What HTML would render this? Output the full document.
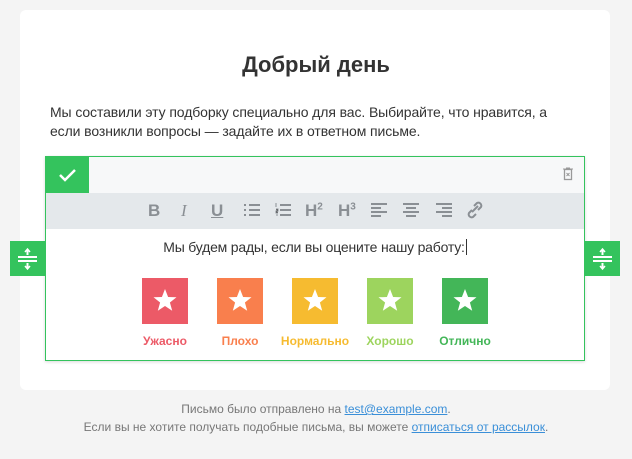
<!DOCTYPE html>
<html><head><meta charset="utf-8"><style>
*{margin:0;padding:0;box-sizing:border-box}
body{width:632px;height:459px;background:#f4f4f4;font-family:"Liberation Sans",Arial,sans-serif;position:relative;overflow:hidden}
.card{position:absolute;left:20px;top:10px;width:590px;height:380px;background:#fff;border-radius:6px}
h1{position:absolute;left:0;top:52px;width:632px;text-align:center;font-size:22px;font-weight:bold;color:#333}
.p{position:absolute;left:50px;top:103px;width:525px;font-size:14px;line-height:19px;color:#333;letter-spacing:-0.1px}
.ed{position:absolute;left:45px;top:156px;width:540px;height:205px;border:1px solid #34c35d;background:#fff;box-shadow:0 1px 3px rgba(0,0,0,.15)}
.top{position:absolute;left:0;top:0;width:538px;height:36px;background:#f7f8f9}
.chk{position:absolute;left:0;top:0;width:43px;height:36px;background:#34c35d}
.tb{position:absolute;left:0;top:36px;width:538px;height:36px;background:#e4e8eb;color:#8a8f94;font-weight:bold;font-size:17px}
.tb span{position:absolute;top:8px}
.line{position:absolute;left:0;top:82px;width:538px;text-align:center;font-size:14px;color:#333;letter-spacing:-0.2px}
.h{position:absolute;top:241px;width:35px;height:35px;background:#34c35d}
.sq{position:absolute;top:278px;width:46px;height:46px}
.lb{position:absolute;top:334px;width:90px;text-align:center;font-size:12px;font-weight:bold}
.f{position:absolute;left:0;width:632px;text-align:center;font-size:12px;color:#777}
.f a{color:#3a8fd8;text-decoration:underline}
</style></head><body>
<div class="card"></div>
<h1>Добрый день</h1>
<div class="p">Мы составили эту подборку специально для вас. Выбирайте, что нравится, а если возникли вопросы — задайте их в ответном письме.</div>
<div class="ed">
<div class="top"><div class="chk"><svg width="43" height="36"><path d="M14 18l5 5 10-10" stroke="#fff" stroke-width="2.5" fill="none"/></svg></div>
<svg style="position:absolute;left:517px;top:10px" width="10" height="14"><rect x="1.5" y="2.5" width="7" height="10" fill="none" stroke="#999" stroke-width="1.3"/><path d="M0 2h10M3 1h4M3.5 6l3 3M6.5 6l-3 3" stroke="#999"/></svg></div>
<div class="tb">
<span style="left:102px">B</span>
<span style="left:135px;font-style:italic;font-weight:normal;font-family:'Liberation Serif'">I</span>
<span style="left:165px;text-decoration:underline">U</span>
<svg style="position:absolute;left:198px;top:10px" width="16" height="14" stroke="#8a8f94" stroke-width="2"><path d="M0 2h2M5 2h11M0 7h2M5 7h11M0 12h2M5 12h11"/></svg>
<svg style="position:absolute;left:229px;top:9px" width="16" height="16" stroke="#8a8f94" stroke-width="2"><path d="M5 3h11M5 8h11M5 13h11"/><path d="M1 1v4M1 7h2v2H1v2h2M1 13h2" stroke-width="1"/></svg>
<span style="left:259px">H<sup style="font-size:10px">2</sup></span>
<span style="left:292px">H<sup style="font-size:10px">3</sup></span>
<svg style="position:absolute;left:325px;top:10px" width="16" height="14" stroke="#8a8f94" stroke-width="2"><path d="M0 1h16M0 5h10M0 9h16M0 13h10"/></svg>
<svg style="position:absolute;left:357px;top:10px" width="16" height="14" stroke="#8a8f94" stroke-width="2"><path d="M0 1h16M3 5h10M0 9h16M3 13h10"/></svg>
<svg style="position:absolute;left:390px;top:10px" width="16" height="14" stroke="#8a8f94" stroke-width="2"><path d="M0 1h16M6 5h10M0 9h16M6 13h10"/></svg>
<svg style="position:absolute;left:421px;top:8px" width="16" height="18" stroke="#8a8f94" stroke-width="2" fill="none"><path d="M7 5l3-3a3 3 0 0 1 4 4l-3 3M9 13l-3 3a3 3 0 0 1-4-4l3-3M5 11l6-6"/></svg>
</div>
<div class="line">Мы будем рады, если вы оцените нашу работу:<span style="border-left:1px solid #333;margin-left:1px"></span></div>
</div>
<div class="h" style="left:10px"><svg width="35" height="35" stroke="#fff" stroke-width="2"><path d="M8 16h19M8 20h19M17.5 8v6M17.5 22v6" /><path d="M15 11l2.5-3 2.5 3M15 25l2.5 3 2.5-3" fill="none" stroke-width="1.5"/></svg></div>
<div class="h" style="left:585px"><svg width="35" height="35" stroke="#fff" stroke-width="2"><path d="M8 16h19M8 20h19M17.5 8v6M17.5 22v6" /><path d="M15 11l2.5-3 2.5 3M15 25l2.5 3 2.5-3" fill="none" stroke-width="1.5"/></svg></div>
<svg width="0" height="0"><defs><path id="st" d="M23 11l3.1 8 8.4.3-6.6 5.2 2.3 8.2L23 28l-7.2 4.7 2.3-8.2-6.6-5.2 8.4-.3z" fill="#fff"/></defs></svg>
<div class="sq" style="left:142px;background:#ec5a67"><svg width="46" height="46"><use href="#st"/></svg></div>
<div class="sq" style="left:217px;background:#f97f4d"><svg width="46" height="46"><use href="#st"/></svg></div>
<div class="sq" style="left:292px;background:#f6bb30"><svg width="46" height="46"><use href="#st"/></svg></div>
<div class="sq" style="left:367px;background:#9dd45e"><svg width="46" height="46"><use href="#st"/></svg></div>
<div class="sq" style="left:442px;background:#43b658"><svg width="46" height="46"><use href="#st"/></svg></div>
<div class="lb" style="left:120px;color:#ec5a67">Ужасно</div>
<div class="lb" style="left:195px;color:#f97f4d">Плохо</div>
<div class="lb" style="left:270px;color:#f6bb30">Нормально</div>
<div class="lb" style="left:345px;color:#9dd45e">Хорошо</div>
<div class="lb" style="left:420px;color:#43b658">Отлично</div>
<div class="f" style="top:402px">Письмо было отправлено на <a>test@example.com</a>.</div>
<div class="f" style="top:420px">Если вы не хотите получать подобные письма, вы можете <a>отписаться от рассылок</a>.</div>
</body></html>
